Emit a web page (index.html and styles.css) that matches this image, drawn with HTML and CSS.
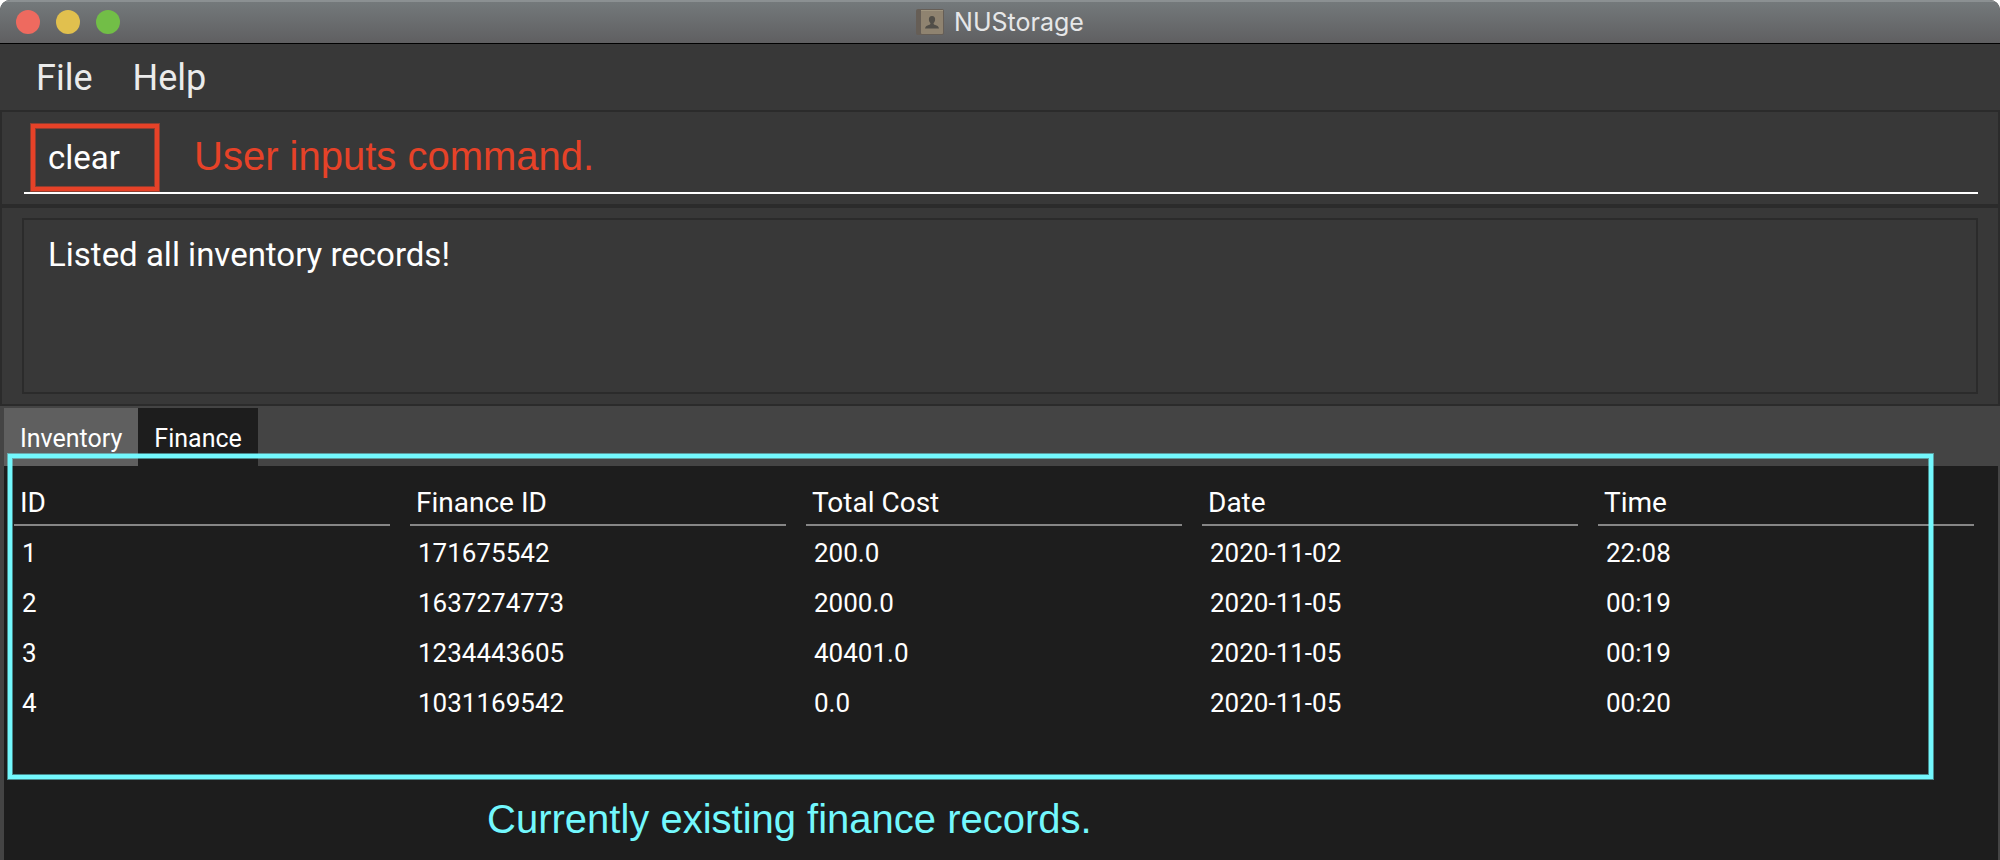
FILE: index.html
```html
<!DOCTYPE html>
<html lang="en">
<head>
  <meta charset="utf-8">
  <title>NUStorage</title>
  <link rel="stylesheet" href="styles.css">
</head>
<body>
  <div class="window">
    <header class="titlebar">
      <div class="lights">
        <button class="light light-close" aria-label="Close"></button>
        <button class="light light-minimize" aria-label="Minimize"></button>
        <button class="light light-zoom" aria-label="Zoom"></button>
      </div>
      <h1 class="title">
        <svg class="title-icon" viewBox="0 0 28 26" aria-hidden="true">
          <rect x="0" y="0" width="28" height="26" rx="2" fill="#665e56"/>
          <rect x="5" y="1" width="22" height="24" rx="1" fill="#8f8370"/>
          <rect x="5" y="1" width="22" height="1" fill="#a0957f"/>
          <path d="M16 7c-2.200 0-3.300 1.600-3.100 3.700.1 1.500.8 2.500 1.500 3.300.2 1.200-.4 1.500-1.600 2-1.700.6-3.400.9-3.800 3.500h14c-.4-2.600-2.100-2.900-3.800-3.500-1.200-.5-1.800-.8-1.600-2 .7-.8 1.400-1.800 1.500-3.300C19.300 8.600 18.200 7 16 7z" fill="#514e48"/>
        </svg>
        <span>NUStorage</span>
      </h1>
    </header>

    <nav class="menubar">
      <button class="menu">File</button>
      <button class="menu">Help</button>
    </nav>

    <section class="pane command-pane">
      <input class="command" type="text" value="clear" aria-label="Command">
      <div class="mark mark-command"></div>
      <p class="note note-command">User inputs command.</p>
    </section>

    <section class="pane result-pane">
      <textarea class="result" readonly aria-label="Result">Listed all inventory records!</textarea>
    </section>

    <main class="records">
      <div class="tabs" role="tablist">
        <button class="tab" role="tab" aria-selected="false">Inventory</button>
        <button class="tab tab-active" role="tab" aria-selected="true">Finance</button>
      </div>
      <div class="sheet">
        <table class="table">
          <thead>
            <tr>
              <th><div class="head">ID</div></th>
              <th><div class="head">Finance ID</div></th>
              <th><div class="head">Total Cost</div></th>
              <th><div class="head">Date</div></th>
              <th><div class="head">Time</div></th>
            </tr>
          </thead>
          <tbody>
            <tr><td>1</td><td>171675542</td><td>200.0</td><td>2020-11-02</td><td>22:08</td></tr>
            <tr><td>2</td><td>1637274773</td><td>2000.0</td><td>2020-11-05</td><td>00:19</td></tr>
            <tr><td>3</td><td>1234443605</td><td>40401.0</td><td>2020-11-05</td><td>00:19</td></tr>
            <tr><td>4</td><td>1031169542</td><td>0.0</td><td>2020-11-05</td><td>00:20</td></tr>
          </tbody>
        </table>
      </div>
      <div class="mark mark-records"></div>
      <p class="note note-records">Currently existing finance records.</p>
    </main>
  </div>
</body>
</html>
```

FILE: styles.css
```css
* {
  box-sizing: border-box;
}

body {
  margin: 0;
  background: #fff;
  color: #fff;
  font-family: Roboto, "Liberation Sans", sans-serif;
}

button,
input,
textarea {
  margin: 0;
  border: 0;
  background: none;
  color: inherit;
  font: inherit;
}

.window {
  display: flex;
  flex-direction: column;
  min-height: 100vh;
  overflow: hidden;
  border-radius: 10px 10px 0 0;
  background: #383838;
}

/* Title bar */
.titlebar {
  display: grid;
  grid-template-columns: 1fr auto 1fr;
  align-items: center;
  height: 44px;
  padding: 0 16px 1px;
  border-top: 2px solid #8b9092;
  border-bottom: 1px solid #000;
  background: linear-gradient(#74797b, #5f5f61);
}

.lights {
  display: flex;
  gap: 16px;
}

.light {
  width: 24px;
  height: 24px;
  padding: 0;
  border-radius: 50%;
}

.light-close {
  background: #ee6a5f;
}

.light-minimize {
  background: #e1c04e;
}

.light-zoom {
  background: #72be47;
}

.title {
  display: flex;
  align-items: center;
  gap: 10px;
  margin: 0;
  color: #e6e7e8;
  font: 400 25px/32px Inter, sans-serif;
}

.title-icon {
  width: 28px;
  height: 26px;
}

/* Menu bar */
.menubar {
  display: flex;
  gap: 36px;
  height: 66px;
  padding: 0 34px;
  color: #ebebeb;
}

.menu {
  padding: 0 2px;
  font-size: 36px;
  line-height: 68px;
}

/* Command and result panes */
.pane {
  position: relative;
  border: 2px solid #2b2b2b;
  padding: 10px 20px;
}

.command-pane {
  padding-left: 22px;
}

.command {
  display: block;
  width: 100%;
  height: 72px;
  padding: 0 24px;
  border-bottom: 2px solid #fff;
  font-size: 33px;
}

.result {
  display: block;
  width: 100%;
  height: 176px;
  padding: 15px 24px;
  border: 2px solid #2b2b2b;
  font-size: 33px;
  line-height: 40px;
  resize: none;
}

/* Records */
.records {
  position: relative;
  display: flex;
  flex: 1;
  flex-direction: column;
  padding: 2px 2px 0 4px;
  background: #444;
}

.tabs {
  display: flex;
}

.tab {
  height: 58px;
  padding: 2px 16px 0;
  background: #5f5f5f;
  font-size: 25px;
}

.tab-active {
  background: #1d1d1d;
}

.sheet {
  flex: 1;
  padding-right: 14px;
  background: #1d1d1d;
}

.table {
  width: 100%;
  border-collapse: collapse;
  table-layout: fixed;
  text-align: left;
}

th {
  padding: 17px 10px 2px;
  font-size: 28px;
  font-weight: 400;
}

.head {
  padding: 0 6px 1px;
  border-bottom: 2px solid #868686;
  line-height: 40px;
}

td {
  height: 50px;
  padding: 0 18px;
  font-size: 26px;
}

/* Annotations drawn over the window */
.mark {
  position: absolute;
  border: 4px solid;
  box-shadow: 0 0 0 1px var(--edge), inset 0 0 0 1px var(--edge);
  pointer-events: none;
}

.mark-command {
  --edge: #e6422880;
  top: 12px;
  left: 29px;
  width: 128px;
  height: 67px;
  border-color: #e64228;
}

.mark-records {
  --edge: #73f8fd80;
  top: 48px;
  right: 67px;
  left: 8px;
  height: 325px;
  border-color: #73f8fd;
}

.note {
  position: absolute;
  margin: 0;
  font: 40px/48px "Liberation Sans", Arial, sans-serif;
  pointer-events: none;
}

.note-command {
  top: 20px;
  left: 192px;
  color: #e64228;
}

.note-records {
  top: 389px;
  left: 487px;
  color: #73f8fd;
}
```
